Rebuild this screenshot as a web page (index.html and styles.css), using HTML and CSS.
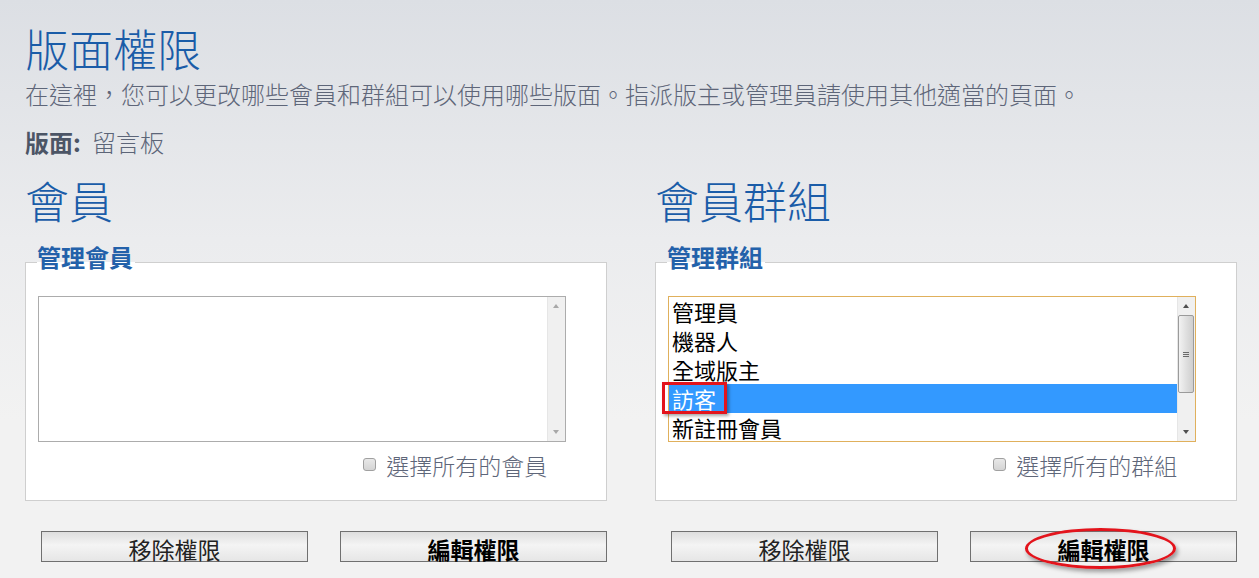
FILE: index.html
```html
<!DOCTYPE html>
<html lang="zh-Hant">
<head>
    <meta charset="UTF-8">
    <meta name="viewport" content="width=device-width, initial-scale=1.0">
    <title>版面權限</title>
    <link rel="stylesheet" href="styles.css">
</head>
<body>
    <!-- En-tête -->
    <h1 class="page-title">版面權限</h1>
    <p class="intro">在這裡，您可以更改哪些會員和群組可以使用哪些版面。指派版主或管理員請使用其他適當的頁面。</p>
    <p class="forum-name"><strong>版面:</strong> 留言板</p>

    <div class="columns">
        <!-- Colonne membres -->
        <section class="column">
            <h2>會員</h2>
            <fieldset>
                <legend>管理會員</legend>
                <div class="listbox">
                    <ul class="options"></ul>
                    <div class="scrollbar is-disabled">
                        <span class="arrow up"></span>
                        <span class="arrow down"></span>
                    </div>
                </div>
                <div class="select-all">
                    <label><input type="checkbox"> 選擇所有的會員</label>
                </div>
            </fieldset>
            <div class="actions">
                <button type="button">移除權限</button>
                <button type="button" class="primary">編輯權限</button>
            </div>
        </section>

        <!-- Colonne groupes -->
        <section class="column">
            <h2>會員群組</h2>
            <fieldset>
                <legend>管理群組</legend>
                <div class="listbox is-focused">
                    <ul class="options">
                        <li>管理員</li>
                        <li>機器人</li>
                        <li>全域版主</li>
                        <li class="selected"><span class="boxed">訪客</span></li>
                        <li>新註冊會員</li>
                    </ul>
                    <div class="scrollbar">
                        <span class="arrow up"></span>
                        <span class="thumb"><i></i><i></i><i></i></span>
                        <span class="arrow down"></span>
                    </div>
                </div>
                <div class="select-all">
                    <label><input type="checkbox"> 選擇所有的群組</label>
                </div>
            </fieldset>
            <div class="actions">
                <button type="button">移除權限</button>
                <button type="button" class="primary circled">編輯權限</button>
            </div>
        </section>
    </div>
</body>
</html>
```

FILE: styles.css
```css
/* Page */
* {
    font-family: "Noto Sans CJK TC", "Noto Sans", sans-serif;
}
html, body {
    height: 100%;
}
body {
    margin: 0;
    padding: 0 22px 0 25px;
    background: linear-gradient(to bottom, #dcdfe4 0, #ebecee 240px, #f2f2f2 420px);
    color: #5e6679;
}

/* Titres */
.page-title {
    margin: 26px 0 0;
    font-size: 44px;
    line-height: 44px;
    font-weight: 300;
    color: #1a5ca8;
}
.intro {
    margin: 12px 0 0;
    font-size: 24px;
    line-height: 24px;
    font-weight: 300;
    white-space: nowrap;
}
.forum-name {
    margin: 24px 0 0;
    font-size: 24px;
    line-height: 24px;
    font-weight: 300;
    color: #5c6578;
}
.forum-name strong {
    margin-right: 6px;
    font-weight: bold;
    color: #4c5566;
}
h2 {
    margin: 24px 0 0;
    font-size: 44px;
    line-height: 44px;
    font-weight: 300;
    color: #1a5ca8;
}

/* Deux colonnes */
.columns {
    display: grid;
    grid-template-columns: 582px 582px;
    column-gap: 48px;
}

fieldset {
    margin: 23px 0 0;
    padding: 16px 12px 23px;
    border: 1px solid #cfcfcf;
    background: #fff;
}
legend {
    padding: 0 2px 11px 0;
    margin-left: -1px;
    font-size: 24px;
    line-height: 24px;
    font-weight: bold;
    color: #2361aa;
}

/* Liste de sélection */
.listbox {
    display: flex;
    width: 95%;
    height: 146px;
    box-sizing: border-box;
    border: 1px solid #acacac;
    background: #fff;
}
.listbox.is-focused {
    border-color: #e0b05c;
}
.options {
    flex: 1;
    margin: 0;
    padding: 0;
    list-style: none;
}
.options li {
    height: 29px;
    padding-left: 3px;
    font-size: 22px;
    line-height: 29px;
    color: #000;
}
.options li:last-child {
    height: 28px;
}
.options li.selected {
    background: #3399ff;
    color: #fff;
}
.boxed {
    position: relative;
    display: inline-block;
    height: 29px;
}
.boxed::after {
    content: "";
    position: absolute;
    left: -10px;
    right: -11px;
    top: -2px;
    bottom: -1px;
    border: 3px solid #e3141c;
    box-shadow: 2px 2px 3px rgba(0, 0, 0, 0.35);
}

/* Barre de défilement */
.scrollbar {
    position: relative;
    width: 17px;
    background: #f0f0f0;
    border-left: 1px solid #e6e6e6;
}
.arrow {
    position: absolute;
    left: 5px;
    width: 0;
    height: 0;
    border-left: 3.5px solid transparent;
    border-right: 3.5px solid transparent;
}
.arrow.up {
    top: 7px;
    border-bottom: 4px solid #505050;
}
.arrow.down {
    bottom: 7px;
    border-top: 4px solid #505050;
}
.is-disabled .arrow.up {
    border-bottom-color: #a8a8a8;
}
.is-disabled .arrow.down {
    border-top-color: #a8a8a8;
}
.thumb {
    position: absolute;
    top: 18px;
    left: 0;
    width: 14px;
    height: 76px;
    border: 1px solid #9b9b9b;
    border-radius: 2px;
    background: linear-gradient(to right, #f2f2f2, #dcdcdc 60%, #cfcfcf);
    display: flex;
    flex-direction: column;
    align-items: center;
    justify-content: center;
    gap: 1px;
}
.thumb i {
    display: block;
    width: 6px;
    height: 1px;
    background: #6a6a6a;
}

/* Tout sélectionner */
.select-all {
    width: 95%;
    box-sizing: border-box;
    margin-top: 10px;
    padding-right: 19px;
    text-align: right;
}
.select-all label {
    display: inline-flex;
    align-items: center;
    gap: 10px;
    font-size: 23px;
    line-height: 24px;
    font-weight: 300;
    color: #5e6679;
}
.select-all input {
    appearance: none;
    margin: 0;
    width: 13px;
    height: 13px;
    border: 1px solid #a0a0a0;
    border-radius: 3px;
    background: linear-gradient(#e8e8e8, #d4d4d4);
}

/* Boutons */
.actions {
    display: flex;
    gap: 32px;
    margin-top: 30px;
    padding-left: 16px;
}
button {
    flex: 1;
    height: 31px;
    box-sizing: border-box;
    padding: 6px 0 0;
    border: 1px solid #707070;
    background: linear-gradient(to bottom, #dedede, #f4f4f4 45%, #e6e6e6);
    font-size: 23px;
    line-height: 23px;
    color: #222;
    cursor: pointer;
}
button.primary {
    font-weight: bold;
    color: #000;
}
button.circled {
    position: relative;
}
button.circled::after {
    content: "";
    position: absolute;
    left: 54px;
    top: -4px;
    width: 151px;
    height: 41px;
    box-sizing: border-box;
    border: 3px solid #e3141c;
    border-radius: 50%;
    box-shadow: 2px 3px 4px rgba(0, 0, 0, 0.35);
}
```
